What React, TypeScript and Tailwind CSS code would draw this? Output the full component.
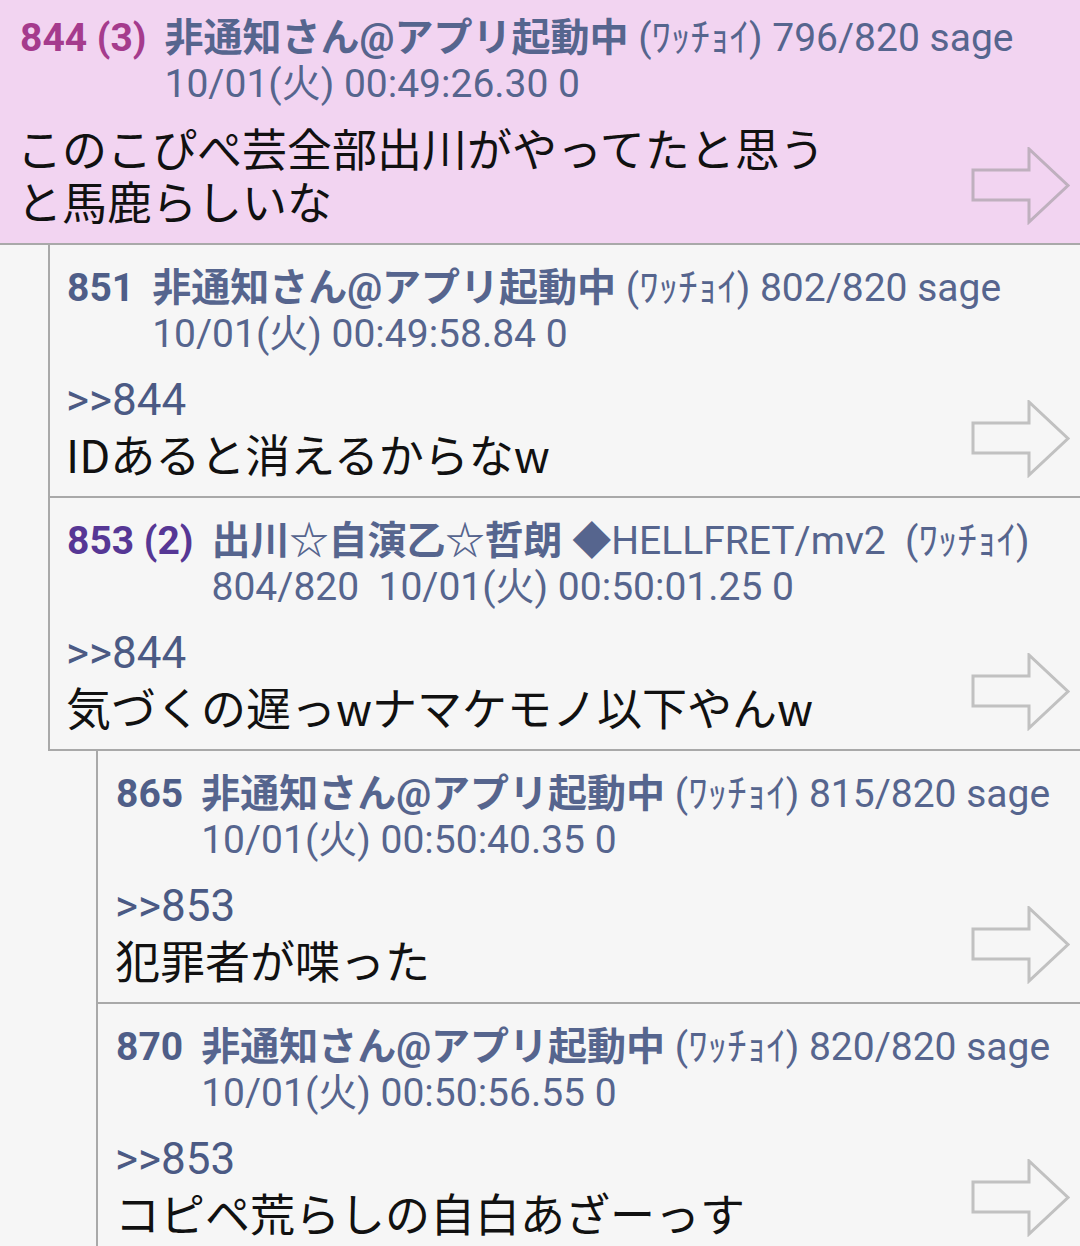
import React from "react"

type Post = {
  num: string
  numColor: string
  name: string
  trip?: string
  line1: string
  line2: string
  anchor?: string
  body: string[]
}

const top: Post = {
  num: "844 (3)",
  numColor: "text-[#a53b8d]",
  name: "非通知さん@アプリ起動中",
  line1: " (ﾜｯﾁｮｲ) 796/820 sage",
  line2: "10/01(火) 00:49:26.30 0",
  body: ["このこぴぺ芸全部出川がやってたと思うと馬鹿らしいな"],
}

const level1: Post[] = [
  {
    num: "851",
    numColor: "text-[#4f5e88]",
    name: "非通知さん@アプリ起動中",
    line1: " (ﾜｯﾁｮｲ) 802/820 sage",
    line2: "10/01(火) 00:49:58.84 0",
    anchor: ">>844",
    body: ["IDあると消えるからなw"],
  },
  {
    num: "853 (2)",
    numColor: "text-[#563795]",
    name: "出川☆自演乙☆哲朗",
    trip: " ◆HELLFRET/mv2",
    line1: "  (ﾜｯﾁｮｲ)",
    line2: "804/820  10/01(火) 00:50:01.25 0",
    anchor: ">>844",
    body: ["気づくの遅っwナマケモノ以下やんw"],
  },
]

const level2: Post[] = [
  {
    num: "865",
    numColor: "text-[#4f5e88]",
    name: "非通知さん@アプリ起動中",
    line1: " (ﾜｯﾁｮｲ) 815/820 sage",
    line2: "10/01(火) 00:50:40.35 0",
    anchor: ">>853",
    body: ["犯罪者が喋った"],
  },
  {
    num: "870",
    numColor: "text-[#4f5e88]",
    name: "非通知さん@アプリ起動中",
    line1: " (ﾜｯﾁｮｲ) 820/820 sage",
    line2: "10/01(火) 00:50:56.55 0",
    anchor: ">>853",
    body: ["コピペ荒らしの自白あざーっす"],
  },
]

const Arrow = () => (
  <svg width="100" height="78" viewBox="0 0 100 78" className="shrink-0 mr-[9px] mb-[2px]">
    <polygon
      points="2,23 58,23 58,2 97,38.5 58,75 58,53 2,53"
      fill="none"
      stroke="rgba(140,140,140,0.5)"
      strokeWidth="3"
      strokeLinejoin="miter"
    />
  </svg>
)

const PostView = ({ p, first, pad }: { p: Post; first?: boolean; pad: string }) => (
  <div className={`${first ? "pt-[15px]" : "pt-[20px]"} pb-[16px] border-b-2 border-[#a9a9a9] ${pad}`}>
    <div className="flex gap-[18px] text-[39px] leading-[46px] font-['Roboto','Noto_Sans_CJK_JP',sans-serif]">
      <div className={`font-bold shrink-0 ${p.numColor}`}>{p.num}</div>
      <div className="text-[#56658e] whitespace-pre">
        <div>
          <span className="font-bold">{p.name}</span>
          {p.trip && <span>{p.trip}</span>}
          <span>{p.line1}</span>
        </div>
        <div>{p.line2}</div>
      </div>
    </div>
    <div className={`flex items-end ${first ? "mt-[14px]" : "mt-[17px]"}`}>
      <div
        className={`flex-1 min-w-0 pr-[120px] text-[45px] leading-[53px] text-[#111] font-['Noto_Sans_CJK_JP',sans-serif] ${
          first ? "-ml-[3px]" : "-ml-[1px]"
        }`}
      >
        {p.anchor && <div className="text-[#4b5a84] font-['Roboto',sans-serif] text-[44px]">{p.anchor}</div>}
        {p.body.map((b, i) => (
          <div key={i}>{b}</div>
        ))}
      </div>
      <Arrow />
    </div>
  </div>
)

export default function App() {
  return (
    <div className="w-[1080px] h-[1246px] overflow-hidden bg-[#f6f6f6]">
      <div className="bg-[#f2d4f1]">
        <PostView p={top} first pad="pl-[20px]" />
      </div>
      <div className="ml-[48px] border-l-2 border-[#a9a9a9]">
        {level1.map((p) => (
          <PostView key={p.num} p={p} pad="pl-[17px]" />
        ))}
      </div>
      <div className="ml-[96px] border-l-2 border-[#a9a9a9]">
        {level2.map((p) => (
          <PostView key={p.num} p={p} pad="pl-[18px]" />
        ))}
      </div>
    </div>
  )
}
